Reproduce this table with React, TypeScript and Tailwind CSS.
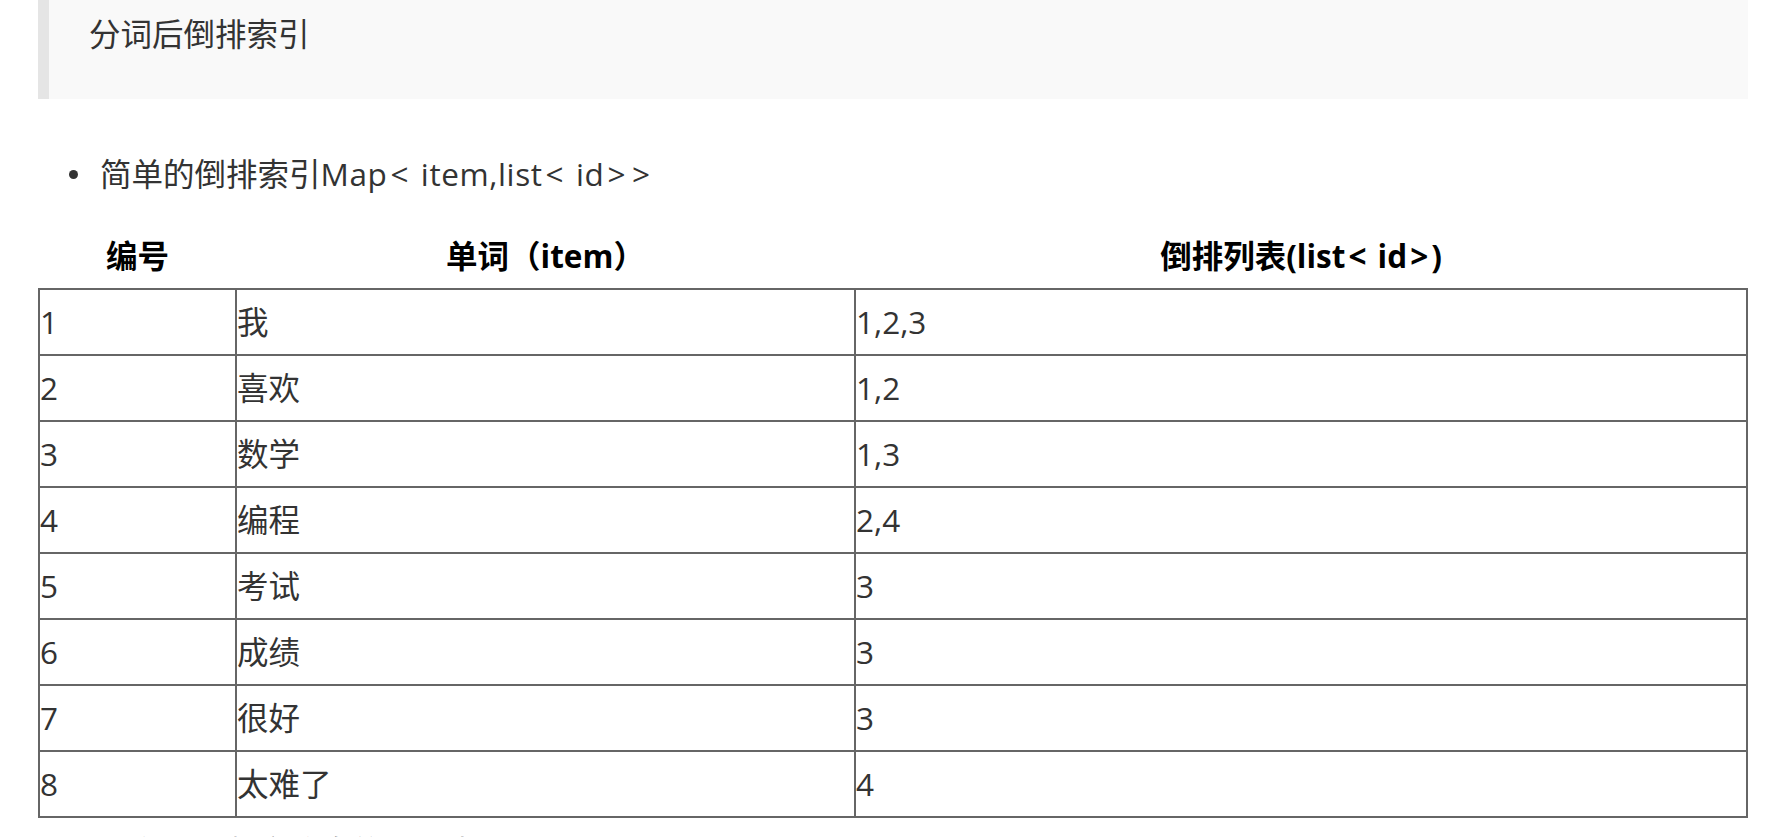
const rows = [
  { id: "1", item: "我", list: "1,2,3" },
  { id: "2", item: "喜欢", list: "1,2" },
  { id: "3", item: "数学", list: "1,3" },
  { id: "4", item: "编程", list: "2,4" },
  { id: "5", item: "考试", list: "3" },
  { id: "6", item: "成绩", list: "3" },
  { id: "7", item: "很好", list: "3" },
  { id: "8", item: "太难了", list: "4" },
];

// angle brackets are a bit wider in the original font
function B({ c }: { c: string }) {
  return <span className="mx-[3px]">{c}</span>;
}

export default function App() {
  return (
    <div className="h-[837px] w-full overflow-hidden bg-white pl-[38px] pr-[42px] font-['Open_Sans','Noto_Sans_CJK_SC',sans-serif] text-[31.5px] leading-[50px] text-[#333]">
      <blockquote className="border-l-[11px] border-[#e5e5e5] bg-[#f9f9f9] pl-[40px] pt-[9px] pb-[40px]">
        分词后倒排索引
      </blockquote>

      <ul className="mt-[50px]">
        <li className="ml-[31px] flex items-center gap-[22px]">
          <span className="h-[9px] w-[9px] rounded-full bg-[#333]" />
          <span>
            简单的倒排索引
            <span className="tracking-[0.6px]">
              Map<B c="<" /> item,list<B c="<" /> id<B c=">" /><B c=">" />
            </span>
          </span>
        </li>
      </ul>

      <table className="mt-[24px] w-full table-fixed border-collapse">
        <colgroup>
          <col className="w-[197px]" />
          <col className="w-[619px]" />
          <col />
        </colgroup>
        <thead>
          <tr className="h-[66px]">
            <th className="text-center font-bold text-black">编号</th>
            <th className="text-center font-bold text-black">单词（item）</th>
            <th className="text-center font-bold text-black">
              倒排列表(list<B c="<" /> id<B c=">" />)
            </th>
          </tr>
        </thead>
        <tbody>
          {rows.map((r) => (
            <tr key={r.id} className="h-[66px]">
              <td className="border-2 border-[#666] align-middle">{r.id}</td>
              <td className="border-2 border-[#666] align-middle">{r.item}</td>
              <td className="border-2 border-[#666] align-middle">{r.list}</td>
            </tr>
          ))}
        </tbody>
      </table>

      <ul className="mt-[9px]">
        <li className="ml-[31px] flex items-center gap-[22px]">
          <span className="h-[9px] w-[9px] rounded-full bg-[#333]" />
          <span>带有单词频率信息的倒排索引Map&lt; item,list&lt; (id,freq)&gt;&gt;</span>
        </li>
      </ul>
    </div>
  );
}
